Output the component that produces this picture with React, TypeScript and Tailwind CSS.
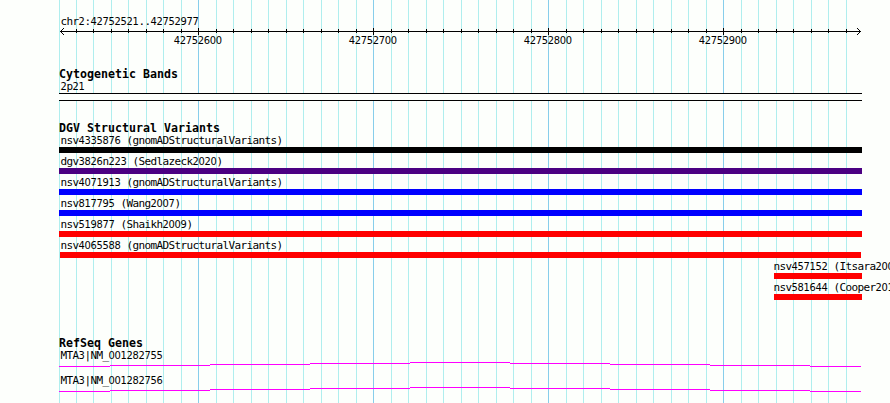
import { Fragment } from 'react';

const gridLines = [
  59, 76, 93, 111, 128, 146, 163, 181, 198, 216, 233, 251, 268, 286, 303, 321,
  338, 356, 373, 391, 408, 426, 443, 461, 478, 496, 513, 531, 548, 566, 583,
  601, 618, 636, 653, 671, 688, 706, 723, 741, 758, 776, 793, 811, 828, 846,
];
const majorLines = [198, 373, 548, 723];

const variants = [
  { name: 'nsv4335876 (gnomADStructuralVariants)', bar: 'ml-[59px] w-[803px] bg-black', label: 'pl-[60.5px]' },
  { name: 'dgv3826n223 (Sedlazeck2020)', bar: 'ml-[59px] w-[803px] bg-[#4b0082]', label: 'pl-[60.5px]' },
  { name: 'nsv4071913 (gnomADStructuralVariants)', bar: 'ml-[59px] w-[803px] bg-[#0000ff]', label: 'pl-[60.5px]' },
  { name: 'nsv817795 (Wang2007)', bar: 'ml-[59px] w-[803px] bg-[#0000ff]', label: 'pl-[60.5px]' },
  { name: 'nsv519877 (Shaikh2009)', bar: 'ml-[59px] w-[803px] bg-[#ff0000]', label: 'pl-[60.5px]' },
  { name: 'nsv4065588 (gnomADStructuralVariants)', bar: 'ml-[60px] w-[801px] bg-[#ff0000]', label: 'pl-[60.5px]' },
  { name: 'nsv457152 (Itsara2009)', bar: 'ml-[774px] w-[88px] bg-[#ff0000]', label: 'pl-[773.5px]' },
  { name: 'nsv581644 (Cooper2011)', bar: 'ml-[774px] w-[88px] bg-[#ff0000]', label: 'pl-[773.5px]' },
];

const genes = ['MTA3|NM_001282755', 'MTA3|NM_001282756'];

// Digits come from the condensed sans so that the zeros are open
function Label({ text, className = '' }: { text: string; className?: string }) {
  return (
    <div className={`h-3 whitespace-pre text-[11px] leading-[13px] tracking-[-0.622px] ${className}`}>
      {text.split(/(\d+)/).map((part, i) =>
        i % 2 ? (
          <span key={i} className="font-['DejaVu_Sans',sans-serif] [font-stretch:75%] tracking-[-0.299px]">
            {part}
          </span>
        ) : (
          <Fragment key={i}>{part}</Fragment>
        )
      )}
    </div>
  );
}

function Heading({ text }: { text: string }) {
  return (
    <h2 className="h-3 whitespace-pre pl-[59px] text-[11.6px] font-bold leading-[13px] tracking-[0.017px]">
      {text}
    </h2>
  );
}

function Grid() {
  return (
    <svg className="absolute inset-0" width="890" height="403" shapeRendering="crispEdges">
      {gridLines.map((x) => (
        <rect key={x} x={x} y="0" width="1" height="403" fill={majorLines.includes(x) ? '#87ceeb' : '#afeeee'} />
      ))}
    </svg>
  );
}

function Ruler() {
  return (
    <svg className="block" width="890" height="7" shapeRendering="crispEdges">
      <rect x="60" y="3" width="801" height="1" />
      {gridLines.slice(1).map((x) =>
        majorLines.includes(x) ? (
          <rect key={x} x={x} y="0" width="1" height="7" />
        ) : (
          <rect key={x} x={x} y="1" width="1" height="4" />
        )
      )}
      <path d="M61 2h1v1h-1zM62 1h1v1h-1zM63 0h1v1h-1zM61 4h1v1h-1zM62 5h1v1h-1zM63 6h1v1h-1z" />
      <path d="M859 2h1v1h-1zM858 1h1v1h-1zM857 0h1v1h-1zM859 4h1v1h-1zM858 5h1v1h-1zM857 6h1v1h-1z" />
    </svg>
  );
}

function GeneLine() {
  return (
    <svg className="block" width="890" height="5" shapeRendering="crispEdges" fill="#ff00ff">
      <rect x="59" y="4" width="51" height="1" />
      <rect x="110" y="3" width="100" height="1" />
      <rect x="210" y="2" width="100" height="1" />
      <rect x="310" y="1" width="100" height="1" />
      <rect x="410" y="0" width="100" height="1" />
      <rect x="510" y="1" width="100" height="1" />
      <rect x="610" y="2" width="100" height="1" />
      <rect x="710" y="3" width="100" height="1" />
      <rect x="810" y="4" width="51" height="1" />
    </svg>
  );
}

export default function App() {
  return (
    <main className="relative h-[403px] w-[890px] overflow-hidden bg-[#fdfffc] font-['DejaVu_Sans_Mono',monospace] text-black">
      <Grid />

      <div className="relative pt-[15px]">
        {/* Position ruler */}
        <Label text="chr2:42752521..42752977" className="pl-[60.5px]" />
        <div className="pt-px">
          <Ruler />
        </div>
        <div className="-mt-px flex gap-[127px] pl-[173.8px]">
          <Label text="42752600" className="w-12" />
          <Label text="42752700" className="w-12" />
          <Label text="42752800" className="w-12" />
          <Label text="42752900" className="w-12" />
        </div>

        {/* Cytobands */}
        <section className="pt-[22px]">
          <Heading text="Cytogenetic Bands" />
          <Label text="2p21" className="pl-[60.5px]" />
          <div className="ml-[59px] mt-px h-2 w-[803px] border-y border-black bg-[#fdfffc]" />
        </section>

        {/* Structural variants */}
        <section className="pt-[21px]">
          <Heading text="DGV Structural Variants" />
          {variants.map((v) => (
            <div key={v.name} className="h-[21px]">
              <Label text={v.name} className={v.label} />
              <div className={`mt-px h-1.5 ${v.bar}`} />
            </div>
          ))}
        </section>

        {/* Genes */}
        <section className="pt-[35px]">
          <Heading text="RefSeq Genes" />
          {genes.map((gene) => (
            <div key={gene} className="h-[25px]">
              <Label text={gene} className="mb-px pl-[60.5px]" />
              <GeneLine />
            </div>
          ))}
        </section>
      </div>
    </main>
  );
}
